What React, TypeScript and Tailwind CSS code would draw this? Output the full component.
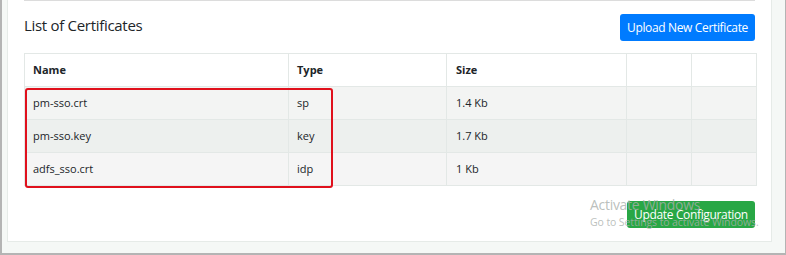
import React from "react";

const rows = [
  { name: "pm-sso.crt", type: "sp", size: "1.4 Kb", bg: "bg-[#f3f4f3]" },
  { name: "pm-sso.key", type: "key", size: "1.7 Kb", bg: "bg-[#edf0ee]" },
  { name: "adfs_sso.crt", type: "idp", size: "1 Kb", bg: "bg-[#f5f5f5]" },
];

export default function App() {
  return (
    <div
      className="relative w-[786px] h-[255px] overflow-hidden border-l-2 border-r border-b-2 border-[#b4b4b4] bg-[#f5f8f6] pl-[5px] text-[#212529]"
      style={{ fontFamily: '"Open Sans", "Noto Sans", sans-serif' }}
    >
      <div className="w-[765px] h-[242px] bg-white border border-t-0 border-[#e6ebe8] px-[16px]">
        <div className="h-px bg-[#dcdcdc]" />
        <div className="flex justify-between items-start mt-[13px]">
          <h2 className="text-[15px] leading-[20px] tracking-[-0.3px] mt-[1px] text-[#212529]">
            List of Certificates
          </h2>
          <button className="h-[27px] w-[135px] rounded-[3px] bg-[#007bff] text-white text-[12px] tracking-[-0.35px] leading-none">
            Upload New Certificate
          </button>
        </div>

        <div className="relative mt-[12px]">
          <table className="w-[732px] border-collapse table-fixed text-[11px]">
            <colgroup>
              <col className="w-[264px]" />
              <col className="w-[158px]" />
              <col className="w-[180px]" />
              <col className="w-[65px]" />
              <col className="w-[65px]" />
            </colgroup>
            <thead>
              <tr className="h-[33px] bg-white">
                <th className="border border-[#e3e8e6] text-left font-bold pl-[8px]">Name</th>
                <th className="border border-[#e3e8e6] text-left font-bold pl-[8px]">Type</th>
                <th className="border border-[#e3e8e6] text-left font-bold pl-[9px]">Size</th>
                <th className="border border-[#e3e8e6]" />
                <th className="border border-[#e3e8e6]" />
              </tr>
            </thead>
            <tbody>
              {rows.map((r) => (
                <tr key={r.name} className={`h-[33px] ${r.bg}`}>
                  <td className="border border-[#e3e8e6] pl-[8px]">{r.name}</td>
                  <td className="border border-[#e3e8e6] pl-[8px]">{r.type}</td>
                  <td className="border border-[#e3e8e6] pl-[9px]">{r.size}</td>
                  <td className="border border-[#e3e8e6]" />
                  <td className="border border-[#e3e8e6]" />
                </tr>
              ))}
            </tbody>
          </table>
          <div className="absolute left-[1px] top-[35px] w-[308px] h-[100px] border-2 border-[#e0101c] rounded-[3px]" />
        </div>

        <div className="flex justify-end mt-[15px]">
          <button className="h-[27px] w-[128px] rounded-[3px] bg-[#28a745] text-white text-[12px] tracking-[-0.35px] leading-none">
            Update Configuration
          </button>
        </div>
      </div>

      <div className="absolute left-[588px] top-[196px] text-[rgba(170,175,172,0.8)] pointer-events-none">
        <div className="text-[14px] leading-[18px] tracking-[-0.3px]">Activate Windows</div>
        <div className="text-[10.5px] leading-[14px] tracking-[-0.1px] mt-[1px]">Go to Settings to activate Windows.</div>
      </div>
    </div>
  );
}
